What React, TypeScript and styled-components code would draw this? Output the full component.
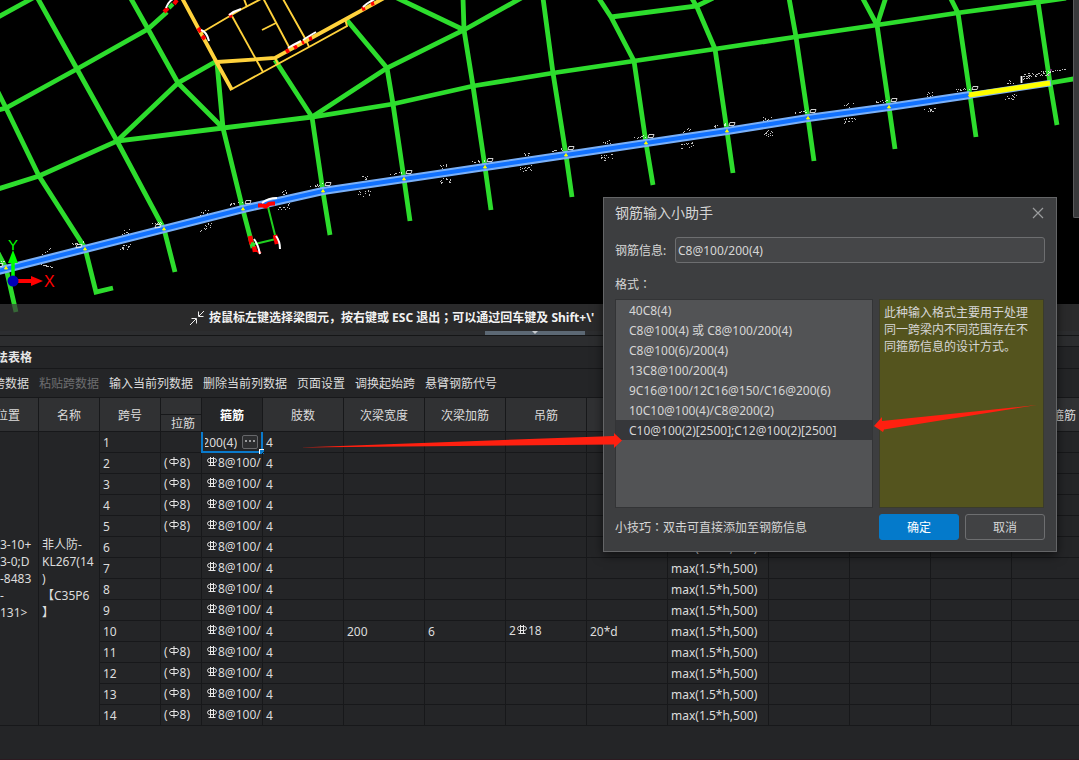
import React from 'react';
import styled, { createGlobalStyle, css } from 'styled-components';

const GlobalStyle = createGlobalStyle`
  *, *::before, *::after { box-sizing: border-box; }
  body {
    margin: 0;
    background: #242527;
    color: #dcdcdc;
    font: 12px/17px "Noto Sans", "Noto Sans CJK SC", sans-serif;
    overflow: hidden;
  }
  button, input { font: inherit; color: inherit; }
`;

const Page = styled.div`
  position: relative;
  display: flex;
  flex-direction: column;
  min-height: 100vh;
  overflow: hidden;
  border-bottom: 1px solid #2c1a20;
`;

/* Colons and semicolons sit in the middle of their em box. */
const Mid = styled.span`
  font-family: "Noto Sans CJK TC", sans-serif;
  line-height: 1;
`;

/* ---------- drawing area ---------- */

const Viewport = styled.section`
  position: relative;
  display: flex;
  height: 331px;
  background: #000;
  overflow: hidden;
`;

const Drawing = styled.svg`
  flex: 1;
  min-width: 0;
  height: 331px;
`;

const SideTrack = styled.div`
  width: 6px;
  height: 218px;
  background: #39393b;
  border-left: 1px solid #5a5a5c;
  border-bottom: 1px solid #5a5a5c;
  border-radius: 0 0 0 2px;
`;

const StatusBar = styled.div`
  position: absolute;
  left: 0;
  right: 0;
  bottom: 0;
  height: 27px;
  display: flex;
  align-items: center;
  gap: 3px;
  padding-left: 189px;
  background: rgba(58, 58, 59, 0.72);
  color: #f2f2f2;
  font-weight: 700;
  white-space: nowrap;
`;

const Splitter = styled.div`
  display: flex;
  justify-content: center;
  height: 5px;
  padding-right: 9px;
  background: #2c2d2f;
  border-bottom: 1px solid #151617;
`;

const SplitHandle = styled.button`
  display: flex;
  justify-content: center;
  width: 100px;
  height: 4px;
  padding: 0;
  border: 0;
  background: #5c6874;
  &::after {
    content: '';
    border: 3px solid transparent;
    border-top-color: #c8ccd0;
    border-bottom: 0;
  }
`;

/* ---------- table panel ---------- */

const Strip = styled.div`
  height: 11px;
  background: #2c2d2f;
  border-bottom: 1px solid #17181a;
`;

const PanelTitle = styled.h2`
  height: 22px;
  margin: 0;
  text-indent: -4px;
  font-size: 12px;
  line-height: 21px;
  color: #e6e6e6;
  border-bottom: 1px solid #17181a;
`;

const Toolbar = styled.div`
  display: flex;
  align-items: center;
  gap: 10px;
  height: 29px;
  margin-left: -7px;
  border-bottom: 1px solid #17181a;
`;

const ToolButton = styled.button`
  padding: 0;
  border: 0;
  background: none;
  white-space: nowrap;
  &:disabled { color: #6d6e70; }
`;

const TableWrap = styled.div`
  overflow: hidden;
`;

const Table = styled.table`
  width: 100%;
  min-width: 1093px;
  table-layout: fixed;
  border-collapse: separate;
  border-spacing: 0;
`;

const Head = styled.th<{ $active?: boolean; $low?: boolean; $side?: 'left' | 'right' }>`
  height: 17px;
  padding: 2px 0 0;
  background: ${p => (p.$active ? '#252628' : '#303133')};
  border-right: 1px solid #17181a;
  border-bottom: 1px solid #17181a;
  font-weight: ${p => (p.$active ? 700 : 400)};
  color: ${p => (p.$active ? '#fff' : '#dcdcdc')};
  line-height: 14px;
  white-space: nowrap;
  ${p => p.$low && css`padding-left: 4px;`}
  ${p => p.$side === 'left' && css`text-align: left; text-indent: -4px;`}
  ${p => p.$side === 'right' && css`text-align: right; padding-right: 16px;`}
`;

const Cell = styled.td`
  position: relative;
  height: 21px;
  padding: 2px 0 0 3px;
  border-right: 1px solid #17181a;
  border-bottom: 1px solid #17181a;
  line-height: 18px;
  white-space: nowrap;
  overflow: hidden;
`;

const SpanCell = styled.td<{ $flush?: boolean }>`
  padding: 0 0 0 ${p => (p.$flush ? 0 : 3)}px;
  border-right: 1px solid #17181a;
  border-bottom: 1px solid #17181a;
  line-height: 17px;
  white-space: pre;
  vertical-align: middle;
  overflow: hidden;
`;

const ActiveCell = styled(Cell)`
  overflow: visible;
`;

const Editor = styled.div`
  display: flex;
  align-items: center;
  justify-content: flex-end;
  gap: 5px;
  height: 18px;
  padding-right: 4px;
`;

const EditorValue = styled.span`
  display: flex;
  justify-content: flex-end;
  width: 32px;
  overflow: hidden;
`;

const SelectionFrame = styled.div`
  position: absolute;
  inset: 0 -1px -1px -1px;
  border: 2px solid #0a7acb;
  border-top: 0;
  pointer-events: none;
  &::after {
    content: '';
    position: absolute;
    right: -3px;
    bottom: -3px;
    width: 5px;
    height: 5px;
    background: #0a7acb;
    border-top: 1px solid #fff;
    border-left: 1px solid #fff;
  }
`;

const MoreButton = styled.button`
  display: flex;
  align-items: center;
  justify-content: center;
  gap: 2px;
  width: 16px;
  height: 14px;
  margin-bottom: 2px;
  padding: 0 0 2px;
  background: #2d2e30;
  border: 1px solid #66676a;
  border-radius: 2px;
  i { width: 2px; height: 2px; background: #9a9b9d; }
`;

const SymbolMark = styled.svg`
  width: 10px;
  height: 10px;
  margin: 0 1px;
  vertical-align: 0;
  fill: none;
  stroke: #e8e8e8;
`;

const Rebar = styled.span<{ $indent?: boolean }>`
  display: block;
  height: 18px;
  padding-left: ${p => (p.$indent ? 1 : 0)}px;
  line-height: 16px;
`;

/* ---------- helper dialog ---------- */

const Dialog = styled.form`
  position: absolute;
  top: 197px;
  right: 22px;
  width: 454px;
  padding: 0 11px 11px;
  background: #3d3e40;
  border: 1px solid #646567;
  box-shadow: 0 3px 10px rgba(0, 0, 0, 0.6);
  color: #d6d6d6;
`;

const DialogHeader = styled.header`
  display: flex;
  align-items: center;
  justify-content: space-between;
  height: 29px;
  padding-right: 1px;
  h1 { margin: 0; font-size: 14px; font-weight: 400; }
`;

const CloseButton = styled.button`
  display: flex;
  padding: 0;
  border: 0;
  background: none;
  svg { width: 12px; height: 12px; stroke: #9b9c9e; stroke-width: 1.2; }
`;

const Field = styled.div`
  display: flex;
  align-items: center;
  gap: 8px;
  margin-top: 10px;
  label { width: 52px; white-space: nowrap; }
`;

const TextBox = styled.input`
  flex: 1;
  min-width: 0;
  height: 26px;
  padding: 0 2px;
  background: #454648;
  border: 1px solid #6d6e70;
  border-radius: 3px;
  outline: 0;
`;

const FormatLabel = styled.div`
  height: 17px;
  margin-top: 13px;
`;

const Columns = styled.div`
  display: grid;
  grid-template-columns: 258px 1fr;
  gap: 6px;
  margin: 6px 1px 0 0;
`;

const FormatList = styled.ul`
  height: 209px;
  margin: 0;
  padding: 0;
  list-style: none;
  background: #525355;
  border: 1px solid #333436;
`;

const FormatItem = styled.li<{ $selected?: boolean }>`
  height: 20px;
  padding: 2px 0 0 13px;
  line-height: 18px;
  background: ${p => (p.$selected ? '#36373a' : 'transparent')};
`;

const Note = styled.p`
  margin: 0;
  padding: 4px 14px 0 4px;
  background: #54541e;
  border: 1px solid #3a3b2c;
`;

const DialogFooter = styled.footer`
  display: flex;
  align-items: center;
  gap: 6px;
  margin-top: 6px;
`;

const Tip = styled.span`
  flex: 1;
`;

const ActionButton = styled.button<{ $primary?: boolean }>`
  width: 80px;
  height: 26px;
  padding: 0;
  border: 1px solid ${p => (p.$primary ? '#047acb' : '#6d6e70')};
  border-radius: 3px;
  background: ${p => (p.$primary ? '#047acb' : '#414244')};
  color: ${p => (p.$primary ? '#fff' : '#d6d6d6')};
`;

const Annotations = styled.svg`
  position: absolute;
  top: 390px;
  right: 0;
  width: 1079px;
  height: 80px;
  fill: #ff2010;
  pointer-events: none;
`;

/* ---------- data ---------- */

const beams = [
  '-2,17 33,-2', '37,-3 77,69 117,141 164,229 175,272', '-2,110 6,108 77,69 148,29 167,12',
  '-2,92 6,108 39,176 85,248 96,292 113,288',
  '-2,189 39,176 117,141 223,128 312,117 393,104 473,86 553,73 634,61 715,49 795,37 877,25 957,13 1038,2 1066,-2',
  '130,-3 148,29 178,83 223,128', '117,141 178,83 215,62', '217,63 223,128 243,210 253,248',
  '275,60 312,117 323,192 330,235', '346,19 387,68 393,104 404,179 410,221',
  '312,117 387,68 464,30 523,-3', '395,-3 464,30', '463,-2 464,30 473,86 485,167 491,210',
  '543,-2 553,73 566,155 572,197', '598,-3 611,17 634,61 646,143 653,185', '611,17 697,6 713,-2',
  '691,-3 697,7 715,49 727,131 733,173', '789,-2 796,37 808,118 814,161',
  '862,-3 877,25 889,107 895,149', '886,-3 877,25', '950,-3 958,13 970,95 976,137',
  '1038,2 1050,83 1057,125', '1050,83 1079,78', '-2,253 6,268 16,312',
];

const mainBeam = '-2,271 85,249 164,229 243,209 323,191 404,179 485,167 566,155 646,143 727,131 808,118 889,107 970,95';

const thickWalls = ['182,-2 217,63 232,90', '217,62 275,58 346,19 386,-3'];
const thinWalls = [
  '232,89 309,47 347,26 345,19', '201,33 240,10 263,-2', '232,16 263,72', '263,-2 289,47',
  '283,-1 306,40 309,47', '262,30 276,23', '244,-1 247,7', '275,58 278,64',
];

const redMarks = [
  '164,12 168,8', '174,4 177,0', '198,28 201,32', '202,36 205,39', '229,16 232,15', '286,52 289,50',
  '294,48 297,46', '302,43 304,42', '309,39 312,38', '362,9 365,8', '371,4 374,3',
];
const whiteMarks = [
  'M166 8 Q168 2 173 -1', 'M201 30 Q207 32 209 41', 'M229 15 Q234 11 241 9', 'M288 48 Q293 45 301 41',
  'M303 40 Q309 36 316 32', 'M363 7 Q367 3 375 -1', 'M262 203 Q268 198 277 198',
  'M254 239 Q258 244 260 254', 'M276 236 Q280 241 280 249',
];

const nodes = [[6, 268], [85, 249], [164, 229], [243, 209], [323, 191], [404, 179], [485, 167], [566, 155], [646, 143], [727, 131], [808, 118], [889, 107], [970, 95]];

const noise = (n: number) => {
  const v = Math.sin(n * 127.1) * 43758.5453;
  return v - Math.floor(v);
};

/* Beam annotations collapse to scattered specks at this zoom level. */
const specks: number[][] = [];
nodes.forEach(([x, y], i) => {
  const slope = i < 4 ? -0.25 : -0.15;
  for (let k = 0; k < 10; k++) {
    const dx = -14 + noise(i * 50 + k) * 13;
    specks.push([x + dx, y - 6 - (dx + 14) * 0.15 + noise(i * 60 + k + 5) * 2]);
  }
  for (let k = 0; k < 7; k++) {
    const dx = 36 + noise(i * 70 + k) * 9;
    specks.push([x + dx, y + dx * slope - 5 - noise(i * 80 + k) * 4]);
  }
  for (let k = 0; k < 14; k++) {
    const dx = 35 + noise(i * 90 + k) * 12;
    specks.push([x + dx, y + dx * slope + 5 + noise(i * 95 + k) * 6]);
  }
});
for (let k = 0; k < 60; k++) {
  const dx = noise(k + 900) * 27;
  specks.push([1023 + dx, 79 - dx * 0.16 - noise(k + 980) * 5]);
}
for (let k = 0; k < 10; k++) specks.push([1050 + k * 1.7, 71 - k * 0.25]);

const columns = [39, 61, 61, 41, 61, 81, 81, 81, 81, 81, 101, 81, 81, 81];

type Row = { tie: boolean; extra?: boolean };
const rows: Row[] = Array.from({ length: 14 }, (_, i) => ({
  tie: (i >= 1 && i <= 4) || i >= 10,
  extra: i === 9,
}));

const formats = [
  '40C8(4)', 'C8@100(4) 或 C8@100/200(4)', 'C8@100(6)/200(4)', '13C8@100/200(4)',
  '9C16@100/12C16@150/C16@200(6)', '10C10@100(4)/C8@200(2)', 'C10@100(2)[2500];C12@100(2)[2500]',
];

const PlainBar = () => (
  <SymbolMark viewBox="0 0 10 10" aria-hidden="true">
    <path d="M5 0V9M2 2.500H8M2 6.500H8" />
    <path d="M2.500 2.500Q0.500 2.800 0.500 4.500T2.500 6.500M7.500 2.500Q9.500 2.800 9.500 4.500T7.500 6.500" />
  </SymbolMark>
);

const RibbedBar = () => (
  <SymbolMark viewBox="0 0 10 10" aria-hidden="true">
    <path d="M3.500 0V9M6.500 0V9M2.500 1.500H7.500M2.500 5.500H7.500M1.500 8.500H8.500" />
    <path d="M2.500 1.500Q0.500 1.800 0.500 3.500T2.500 5.500M7.500 1.500Q9.500 1.800 9.500 3.500T7.500 5.500" />
  </SymbolMark>
);

const Scene = () => (
  <Drawing viewBox="0 0 1073 331" preserveAspectRatio="xMinYMin slice" role="img" aria-label="梁平面图">
    <g fill="none" stroke="#2ddd2d" strokeWidth="4.800">
      {beams.map(p => <polyline key={p} points={p} />)}
    </g>
    <polyline points="268,207 276,239 255,244" fill="none" stroke="#20d020" strokeWidth="2" />
    <g fill="none" stroke="#ffd23c">
      {thickWalls.map(p => <polyline key={p} points={p} strokeWidth="3.800" />)}
      {thinWalls.map(p => <polyline key={p} points={p} strokeWidth="1.900" />)}
    </g>
    <polyline points={mainBeam} fill="none" stroke="#7ab0f8" strokeWidth="8.200" />
    <polyline points={mainBeam} fill="none" stroke="#1272ff" strokeWidth="4" />
    <line x1="969" y1="95.500" x2="1051" y2="83" stroke="#7fb0f0" strokeWidth="6.500" />
    <line x1="969" y1="95" x2="1050" y2="83" stroke="#ffff00" strokeWidth="5" />
    <g fill="#fff" opacity="0.75">
      {specks.map(([x, y], i) => <rect key={i} x={Math.round(x)} y={Math.round(y)} width="1" height="1" />)}
    </g>
    {nodes.map(([x, y]) => (
      <g key={x}>
        <path d={`M${x - 1.5} ${y + 1}l1.500-2.500 1.500 2.500z`} fill="#ffff00" stroke="#ffff00" />
        <path d={`M${x + 2} ${y - 5.5}h5l1-3h-5z`} transform={x < 200 ? 'translate(-11 4)' : undefined} fill="none" stroke="#e8e8e8" strokeWidth="0.900" />
      </g>
    ))}
    <path d="M1021.500 83V76" stroke="#fff" strokeWidth="1.800" />
    <path d="M1050 70h2M1048 75h2" stroke="#d030d0" />
    <g stroke="#f00" strokeWidth="4">
      {redMarks.map(p => <polyline key={p} points={p} />)}
    </g>
    <g fill="none" stroke="#f00">
      <path d="M258 205.500H263L266 206.500 269 204 272 203.500H275" strokeWidth="4" />
      <path d="M250 236l1.500 8M254 246l1 6M258 253l2-2M275 235l2 9" strokeWidth="4.500" />
    </g>
    <path d="M169 8l4-4M251 244l4 1" stroke="#2ddd2d" strokeWidth="4" />
    <g fill="none" stroke="#fff" strokeWidth="2">
      {whiteMarks.map(d => <path key={d} d={d} />)}
    </g>
    <path d="M13 276V261" stroke="#0f0" strokeWidth="3.500" />
    <path d="M8 263L13 250 18 263Z" fill="#0f0" />
    <path d="M18 281H32" stroke="#f00" strokeWidth="4" />
    <path d="M31 276L43 281 31 286Z" fill="#f00" />
    <circle cx="13" cy="281" r="5.500" fill="#0000b8" />
    <text x="8" y="250" fontFamily="Liberation Sans, sans-serif" fontSize="15" fill="#0f0">Y</text>
    <text x="44" y="287" fontFamily="Liberation Sans, sans-serif" fontSize="16" fill="#f00">X</text>
  </Drawing>
);

export default function App() {
  return (
    <>
      <GlobalStyle />
      <Page>
        <Viewport>
          <Scene />
          <SideTrack />
          <StatusBar>
            <svg width="17" height="16" viewBox="0 0 17 16" fill="none" stroke="#eee" aria-hidden="true">
              <path d="M1 15L7 9M2.500 8.500H7.500V13.500M15 1L10 6M9.500 1.500V6.500H14.500" />
            </svg>
            <span>按鼠标左键选择梁图元，按右键或 ESC 退出<Mid>；</Mid>可以通过回车键及 Shift+\'</span>
          </StatusBar>
        </Viewport>
        <Splitter><SplitHandle type="button" aria-label="折叠面板" /></Splitter>
        <Strip />
        <PanelTitle>法表格</PanelTitle>
        <Toolbar>
          <ToolButton>跨数据</ToolButton>
          <ToolButton disabled>粘贴跨数据</ToolButton>
          <ToolButton>输入当前列数据</ToolButton>
          <ToolButton>删除当前列数据</ToolButton>
          <ToolButton>页面设置</ToolButton>
          <ToolButton>调换起始跨</ToolButton>
          <ToolButton>悬臂钢筋代号</ToolButton>
        </Toolbar>
        <TableWrap>
          <Table>
            <colgroup>
              {columns.map((w, i) => <col key={i} width={w} />)}
              <col />
            </colgroup>
            <thead>
              <tr>
                <Head rowSpan={2} $side="left">位置</Head>
                <Head rowSpan={2}>名称</Head>
                <Head rowSpan={2}>跨号</Head>
                <Head />
                <Head rowSpan={2} $active>箍筋</Head>
                <Head rowSpan={2}>肢数</Head>
                <Head rowSpan={2}>次梁宽度</Head>
                <Head rowSpan={2}>次梁加筋</Head>
                <Head rowSpan={2}>吊筋</Head>
                <Head rowSpan={2} />
                <Head rowSpan={2} />
                <Head rowSpan={2} />
                <Head rowSpan={2} />
                <Head rowSpan={2} />
                <Head rowSpan={2} $side="right">箍筋</Head>
              </tr>
              <tr><Head $low>拉筋</Head></tr>
            </thead>
            <tbody>
              {rows.map((row, i) => (
                <tr key={i}>
                  {i === 0 && (
                    <>
                      <SpanCell rowSpan={14} $flush>{'3-10+\n3-0;D\n-8483\n-\n131>'}</SpanCell>
                      <SpanCell rowSpan={14}>{'非人防-\nKL267(14\n)\n【C35P6\n】'}</SpanCell>
                    </>
                  )}
                  <Cell>{i + 1}</Cell>
                  <Cell>{row.tie && <Rebar>(<PlainBar />8)</Rebar>}</Cell>
                  {i === 0 ? (
                    <ActiveCell>
                      <Editor>
                        <EditorValue>200(4)</EditorValue>
                        <MoreButton type="button" aria-label="更多"><i /><i /><i /></MoreButton>
                      </Editor>
                      <SelectionFrame />
                    </ActiveCell>
                  ) : (
                    <Cell><Rebar $indent><RibbedBar />8@100/</Rebar></Cell>
                  )}
                  <Cell>4</Cell>
                  <Cell>{row.extra && '200'}</Cell>
                  <Cell>{row.extra && '6'}</Cell>
                  <Cell>{row.extra && <Rebar>2<RibbedBar />18</Rebar>}</Cell>
                  <Cell>{row.extra && '20*d'}</Cell>
                  <Cell>{i > 4 && 'max(1.5*h,500)'}</Cell>
                  <Cell /><Cell /><Cell /><Cell />
                </tr>
              ))}
            </tbody>
          </Table>
        </TableWrap>

        <Dialog onSubmit={e => e.preventDefault()}>
          <DialogHeader>
            <h1>钢筋输入小助手</h1>
            <CloseButton type="button" aria-label="关闭">
              <svg viewBox="0 0 12 12"><path d="M1 1L11 11M11 1L1 11" /></svg>
            </CloseButton>
          </DialogHeader>
          <Field>
            <label htmlFor="rebar">钢筋信息:</label>
            <TextBox id="rebar" defaultValue="C8@100/200(4)" />
          </Field>
          <FormatLabel id="formats">格式<Mid>：</Mid></FormatLabel>
          <Columns>
            <FormatList role="listbox" aria-labelledby="formats">
              {formats.map((f, i) => (
                <FormatItem key={f} role="option" aria-selected={i === 6} $selected={i === 6}>{f}</FormatItem>
              ))}
            </FormatList>
            <Note>此种输入格式主要用于处理同一跨梁内不同范围存在不同箍筋信息的设计方式。</Note>
          </Columns>
          <DialogFooter>
            <Tip>小技巧<Mid>：</Mid>双击可直接添加至钢筋信息</Tip>
            <ActionButton type="submit" $primary>确定</ActionButton>
            <ActionButton type="button">取消</ActionButton>
          </DialogFooter>
        </Dialog>

        <Annotations viewBox="0 0 1079 80" aria-hidden="true">
          <path d="M299 57.500L614 46V43L622 50.500 614 58V54.500Z" />
          <path d="M1037 15L882 31V27L874 36 883 42 884 39.500Z" />
        </Annotations>
      </Page>
    </>
  );
}
